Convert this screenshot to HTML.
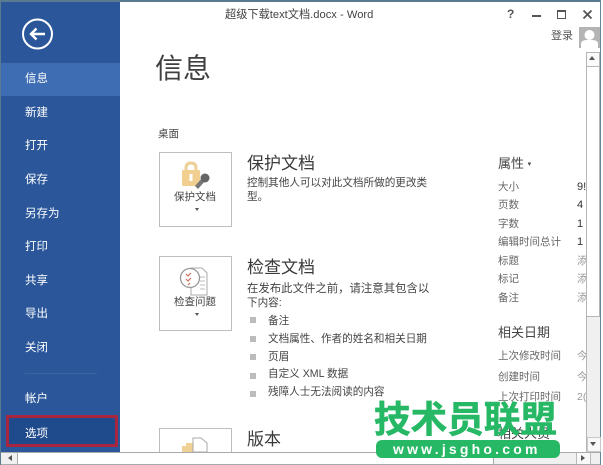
<!DOCTYPE html>
<html><head><meta charset="utf-8"><style>
html,body{margin:0;padding:0;width:603px;height:465px;overflow:hidden;background:#fff}
body{position:relative;font-family:"Liberation Sans","Noto Sans CJK SC",sans-serif;color:#444;filter:blur(.3px)}
.a{position:absolute;white-space:nowrap}
.n{position:absolute;left:25px;color:#fff;font-size:11.5px;line-height:16px;white-space:nowrap}
.h{position:absolute;left:247px;font-size:17px;line-height:22px;color:#3a3a3a;white-space:nowrap}
.t{position:absolute;font-size:10.6px;line-height:14px;color:#444;white-space:nowrap}
.k{position:absolute;left:498px;font-size:10.5px;line-height:14px;color:#666;white-space:nowrap}
.v{position:absolute;left:577px;width:9px;overflow:hidden;font-size:10.5px;line-height:14px;color:#999;white-space:nowrap}
.b{position:absolute;left:577px;width:9px;overflow:hidden;font-size:11px;line-height:14px;color:#333;white-space:nowrap}
.box{position:absolute;left:159px;width:71px;border:1px solid #bdbdbd;background:#fff}
.sq{position:absolute;left:250px;width:6px;height:6px;background:#bcbcbc}
</style></head><body>
<div class="a" style="left:0;top:0;width:603px;height:2px;background:#5a7a90"></div>
<div class="a" style="left:0;top:0;width:1px;height:465px;background:#5a7a90"></div>
<div class="a" style="left:600px;top:0;width:1px;height:465px;background:#6a8496"></div>
<div class="a" style="left:601px;top:0;width:2px;height:465px;background:#fff"></div>

<div class="a" style="left:1px;top:2px;width:119px;height:450px;background:#2b579a"></div>
<div class="a" style="left:1px;top:63px;width:119px;height:33px;background:#3e6db3"></div>
<svg class="a" style="left:21px;top:17px" width="34" height="34" viewBox="0 0 34 34"><circle cx="16.5" cy="17" r="14.5" fill="none" stroke="#fff" stroke-width="2"/><path d="M10 17H24M15.500 11.500L10 17L15.500 22.500" fill="none" stroke="#fff" stroke-width="2.400"/></svg>
<div class="n" style="top:71px">信息</div>
<div class="n" style="top:105px">新建</div>
<div class="n" style="top:138px">打开</div>
<div class="n" style="top:172px">保存</div>
<div class="n" style="top:206px">另存为</div>
<div class="n" style="top:239px">打印</div>
<div class="n" style="top:273px">共享</div>
<div class="n" style="top:306px">导出</div>
<div class="n" style="top:340px">关闭</div>
<div class="a" style="left:25px;top:373px;width:72px;height:1px;background:#3a659f"></div>
<div class="n" style="top:391px">帐户</div>
<div class="a" style="left:6px;top:415px;width:106px;height:26px;background:#1f4a8c;border:3px solid #a82540"></div>
<div class="n" style="top:426px">选项</div>

<div class="a" style="left:225px;top:8px;font-size:11.2px;line-height:14px;color:#444">超级下载text文档.docx - Word</div>
<div class="a" style="left:507px;top:7px;font-size:12px;font-weight:bold;line-height:14px;color:#555">?</div>
<div class="a" style="left:532px;top:15px;width:9px;height:2px;background:#555"></div>
<div class="a" style="left:557px;top:10px;width:7px;height:6px;border:1px solid #555;border-top:2px solid #555"></div>
<svg class="a" style="left:582px;top:9px" width="11" height="11" viewBox="0 0 11 11"><path d="M1.500 1.500L9.500 9.500M9.500 1.500L1.500 9.500" stroke="#555" stroke-width="1.800"/></svg>
<div class="a" style="left:551px;top:29px;font-size:11px;line-height:14px;color:#555">登录</div>
<svg class="a" style="left:579px;top:27px" width="21" height="21" viewBox="0 0 21 21"><rect width="21" height="21" fill="#b4b4b4"/><circle cx="10.500" cy="8" r="5" fill="#fff"/><path d="M2 21V17Q2 13 8 13H13Q19 13 19 17V21Z" fill="#fff"/></svg>

<div class="a" style="left:155px;top:51px;font-size:28px;line-height:36px;color:#404040">信息</div>
<div class="a" style="left:158px;top:127px;font-size:10.5px;line-height:14px;color:#444">桌面</div>

<div class="box" style="top:152px;height:73px"></div>
<svg class="a" style="left:181px;top:161px" width="32" height="30" viewBox="0 0 32 30"><path d="M5 10V7Q5 2 10 2Q15 2 15 7V10" fill="none" stroke="#ecd098" stroke-width="3"/><rect x="1" y="9" width="18" height="16" rx="1" fill="#f0cf90"/><path d="M8.500 13h3v7h-3z" fill="#fff"/><path d="M14 25L22 16L25 19L17 28Z" fill="#777"/><circle cx="24" cy="17" r="4.500" fill="#666"/></svg>
<div class="a" style="left:174px;top:190px;font-size:10.5px;line-height:14px;color:#444">保护文档</div>
<div class="a" style="left:195px;top:208px;width:0;height:0;border:2.500px solid transparent;border-top:3px solid #555"></div>
<div class="h" style="top:153px">保护文档</div>
<div class="t" style="left:247px;top:176px">控制其他人可以对此文档所做的更改类</div>
<div class="t" style="left:247px;top:190px">型。</div>

<div class="box" style="top:256px;height:73px"></div>
<svg class="a" style="left:178px;top:265px" width="32" height="32" viewBox="0 0 32 32"><path d="M13 3H24L29 8V30H13Z" fill="#fff" stroke="#aaa"/><path d="M22 12h5M22 16h5M22 20h5M22 24h5" stroke="#bbb"/><circle cx="12" cy="13" r="9.500" fill="#fff" stroke="#999" stroke-width="1.300"/><path d="M8 9l2 2 3-3M8 14l2 2 3-3M10 20l2-2" fill="none" stroke="#c9725a" stroke-width="1.200"/></svg>
<div class="a" style="left:174px;top:295px;font-size:10.5px;line-height:14px;color:#444">检查问题</div>
<div class="a" style="left:195px;top:313px;width:0;height:0;border:2.500px solid transparent;border-top:3px solid #555"></div>
<div class="h" style="top:257px">检查文档</div>
<div class="t" style="left:247px;top:282px;font-size:11.4px">在发布此文件之前，请注意其包含以</div>
<div class="t" style="left:247px;top:296px">下内容:</div>
<div class="sq" style="top:317px"></div><div class="t" style="left:268px;top:314px">备注</div>
<div class="sq" style="top:336px"></div><div class="t" style="left:268px;top:332px">文档属性、作者的姓名和相关日期</div>
<div class="sq" style="top:354px"></div><div class="t" style="left:268px;top:350px">页眉</div>
<div class="sq" style="top:373px"></div><div class="t" style="left:268px;top:367px">自定义 XML 数据</div>
<div class="sq" style="top:391px"></div><div class="t" style="left:268px;top:385px">残障人士无法阅读的内容</div>

<div class="box" style="top:428px;height:40px"></div>
<svg class="a" style="left:180px;top:436px" width="30" height="16" viewBox="0 0 30 16"><path d="M2 16V10H6V7H17V16Z" fill="#efd095"/><path d="M13 2H21L27 7V16H13Z" fill="#fff" stroke="#aaa"/></svg>
<div class="h" style="top:429px">版本</div>

<div class="a" style="left:498px;top:156px;font-size:13px;line-height:16px;color:#444">属性 <span style="font-size:7px;vertical-align:2px">▾</span></div>
<div class="k" style="top:180px">大小</div><div class="b" style="top:180px">9!</div>
<div class="k" style="top:198px">页数</div><div class="b" style="top:198px">4</div>
<div class="k" style="top:217px">字数</div><div class="b" style="top:217px">1</div>
<div class="k" style="top:235px">编辑时间总计</div><div class="b" style="top:235px">1</div>
<div class="k" style="top:254px">标题</div><div class="v" style="top:254px">添</div>
<div class="k" style="top:272px">标记</div><div class="v" style="top:272px">添</div>
<div class="k" style="top:291px">备注</div><div class="v" style="top:291px">添</div>
<div class="a" style="left:498px;top:324px;font-size:13px;line-height:18px;color:#444">相关日期</div>
<div class="k" style="top:349px">上次修改时间</div><div class="v" style="top:349px">今</div>
<div class="k" style="top:370px">创建时间</div><div class="v" style="top:370px">今</div>
<div class="k" style="top:390px">上次打印时间</div><div class="v" style="top:390px">2(</div>
<div class="a" style="left:498px;top:425px;font-size:13px;line-height:18px;color:#444">相关人员</div>

<div class="a" style="left:586px;top:52px;width:13px;height:400px;background:#f0f0f0;border-left:1px solid #b5b5b5"></div>
<div class="a" style="left:586px;top:52px;width:12px;height:263px;background:#fff;border:1px solid #b5b5b5"></div>
<div class="a" style="left:586px;top:52px;width:12px;height:13px;background:#fbfbfb;border:1px solid #b5b5b5"></div>
<div class="a" style="left:589px;top:56px;width:0;height:0;border:3.500px solid transparent;border-bottom:4px solid #555;border-top:0"></div>
<div class="a" style="left:587px;top:437px;width:12px;height:13px;background:#f8f8f8;border:1px solid #c8c8c8"></div>
<div class="a" style="left:590px;top:442px;width:0;height:0;border:3.500px solid transparent;border-top:4px solid #555;border-bottom:0"></div>

<div class="a" style="left:1px;top:452px;width:599px;height:11px;background:#f0f0f0;border-top:1px solid #aaa;border-bottom:1px solid #aaa"></div>
<div class="a" style="left:17px;top:452px;width:475px;height:11px;background:#fff;border:1px solid #aaa"></div>
<div class="a" style="left:8px;top:455px;width:0;height:0;border:3.500px solid transparent;border-right:4px solid #555;border-left:0"></div>
<div class="a" style="left:576px;top:453px;width:13px;height:11px;background:#f8f8f8;border-left:1px solid #bbb;border-right:1px solid #bbb"></div>
<div class="a" style="left:581px;top:455px;width:0;height:0;border:3.500px solid transparent;border-left:4px solid #555;border-right:0"></div>

<div class="a" style="left:374px;top:394px;font-size:36.6px;line-height:46px;font-weight:bold;color:#27b865;font-family:'Noto Sans CJK SC',sans-serif;-webkit-text-stroke:.6px #27b865">技术员联盟</div>
<div class="a" style="left:376px;top:440px;width:184px;height:18px;border-radius:6px;background:#27b865"></div>
<div class="a" style="left:393px;top:440px;font-size:14px;line-height:18px;font-weight:bold;color:#fff;letter-spacing:3.2px">www.jsgho.com</div>
</body></html>
